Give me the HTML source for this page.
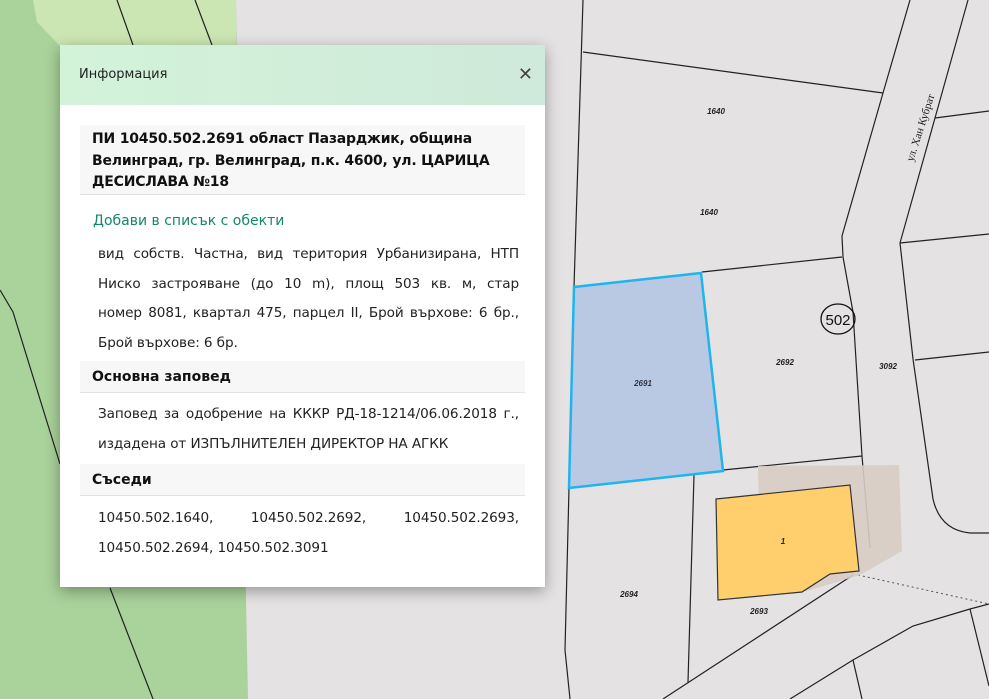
<!DOCTYPE html>
<html><head><meta charset="utf-8"><style>
html,body{margin:0;padding:0;width:989px;height:699px;overflow:hidden;background:#e4e2e2;font-family:"DejaVu Sans",Verdana,"Liberation Sans",sans-serif;}
svg{position:absolute;left:0;top:0}
#p{position:absolute;left:60px;top:45px;width:485px;height:542px;background:#fff;box-shadow:0 4px 14px rgba(0,0,0,.35);}
#h{height:60px;background:linear-gradient(90deg,#d3f3d9,#cfe9da);font-size:13px;color:#222;line-height:60px;padding-left:19px;position:relative}
#x{position:absolute;right:12px;top:0;font-size:18px;font-weight:bold;color:#444}
.t{position:absolute;left:20px;width:445px;background:#f7f7f7;border-bottom:1px solid #e2e2e2;font-weight:bold;color:#111;box-sizing:border-box;padding-left:12px}
.b{position:absolute;left:38px;width:421px;font-size:13.6px;line-height:29.5px;color:#222;letter-spacing:-0.1px;white-space:nowrap}
.b div{text-align:justify;text-align-last:justify}
.b div.l{text-align-last:left}
</style></head><body>
<svg width="989" height="699">
<polygon points="0,0 236,0 240,300 248,699 0,699" fill="#aad29b"/>
<polygon points="33,0 236,0 236,46 60,46 37,22" fill="#cbe6b2"/>
<g fill="none" stroke="#222" stroke-width="1.2">
<polyline points="117,0 133,45"/><polyline points="195,0 212,45"/>
<polyline points="0,290 13,312 60,464"/><polyline points="110,588 153,699"/>
<polyline points="583,0 574,287 569,488 565,650 570,699"/>
<polyline points="583,52 883,93"/>
<polyline points="910,0 883,93 842,236 843,257 853,312 862,456 870,548 Q867,568 853,575"/>
<polyline points="853,575 663,699"/>
<polyline points="702,272 842,257"/>
<polyline points="723,470 862,456"/>
<polyline points="694,475 688,682"/>
<polyline points="968,0 935,118 900,243 913,359 933,499"/>
<path d="M933,499 Q940,530 970,533 L989,533"/>
<polyline points="935,118 989,111"/><polyline points="900,243 989,234"/><polyline points="915,360 989,352"/>
<polyline points="989,604 970,609 913,626 853,660 790,699"/>
<polyline points="970,609 989,686"/><polyline points="853,660 862,699"/>
</g>
<polyline points="858,575 989,604" fill="none" stroke="#555" stroke-dasharray="2,3"/>
<polygon points="758,466 899,465 902,551 860,575 807,591 760,591" fill="#d7cdc3" opacity=".9"/>
<polygon points="716,499 850,485 859,571 830,574 802,592 718,600" fill="#fecf6c" stroke="#333" stroke-width="1.2"/>
<polygon points="574,287 701,273 723,471 569,488" fill="#b9c9e4" stroke="#1fb4ee" stroke-width="2.5"/>
<ellipse cx="838" cy="319" rx="17" ry="15" fill="none" stroke="#111" stroke-width="1.3"/>
<g font-family="Liberation Sans,sans-serif" font-size="8" font-style="italic" font-weight="bold" fill="#222" text-anchor="middle">
<text x="716" y="114">1640</text><text x="709" y="215">1640</text><text x="785" y="365">2692</text>
<text x="643" y="386" fill="#334">2691</text><text x="888" y="369">3092</text><text x="783" y="544">1</text>
<text x="629" y="597">2694</text><text x="759" y="614">2693</text></g>
<text x="838" y="325" font-family="Liberation Sans,sans-serif" font-size="15" text-anchor="middle" fill="#111">502</text>
<text transform="translate(913,162) rotate(-72)" font-family="Liberation Serif,serif" font-size="11" fill="#222">ул. Хан Кубрат</text>
</svg>
<div id="p">
<div id="h">Информация<span id="x">✕</span></div>
<div class="t" style="top:80px;height:70px;font-size:14px;line-height:21.5px;padding-top:4px;letter-spacing:-0.2px">ПИ 10450.502.2691 област Пазарджик, община Велинград, гр. Велинград, п.к. 4600, ул. ЦАРИЦА ДЕСИСЛАВА №18</div>
<div style="position:absolute;left:33px;top:168px;font-size:14px;color:#14866d">Добави в списък с обекти</div>
<div class="b" style="top:195px">
<div>вид собств. Частна, вид територия Урбанизирана, НТП</div>
<div>Ниско застрояване (до 10 m), площ 503 кв. м, стар</div>
<div>номер 8081, квартал 475, парцел II, Брой върхове: 6 бр.,</div>
<div class="l">Брой върхове: 6 бр.</div></div>
<div class="t" style="top:316px;height:32px;font-size:14px;line-height:32px">Основна заповед</div>
<div class="b" style="top:355px">
<div>Заповед за одобрение на КККР РД-18-1214/06.06.2018 г.,</div>
<div class="l">издадена от ИЗПЪЛНИТЕЛЕН ДИРЕКТОР НА АГКК</div></div>
<div class="t" style="top:419px;height:32px;font-size:14px;line-height:32px">Съседи</div>
<div class="b" style="top:459px">
<div>10450.502.1640, 10450.502.2692, 10450.502.2693,</div>
<div class="l">10450.502.2694, 10450.502.3091</div></div>
</div>
</body></html>
